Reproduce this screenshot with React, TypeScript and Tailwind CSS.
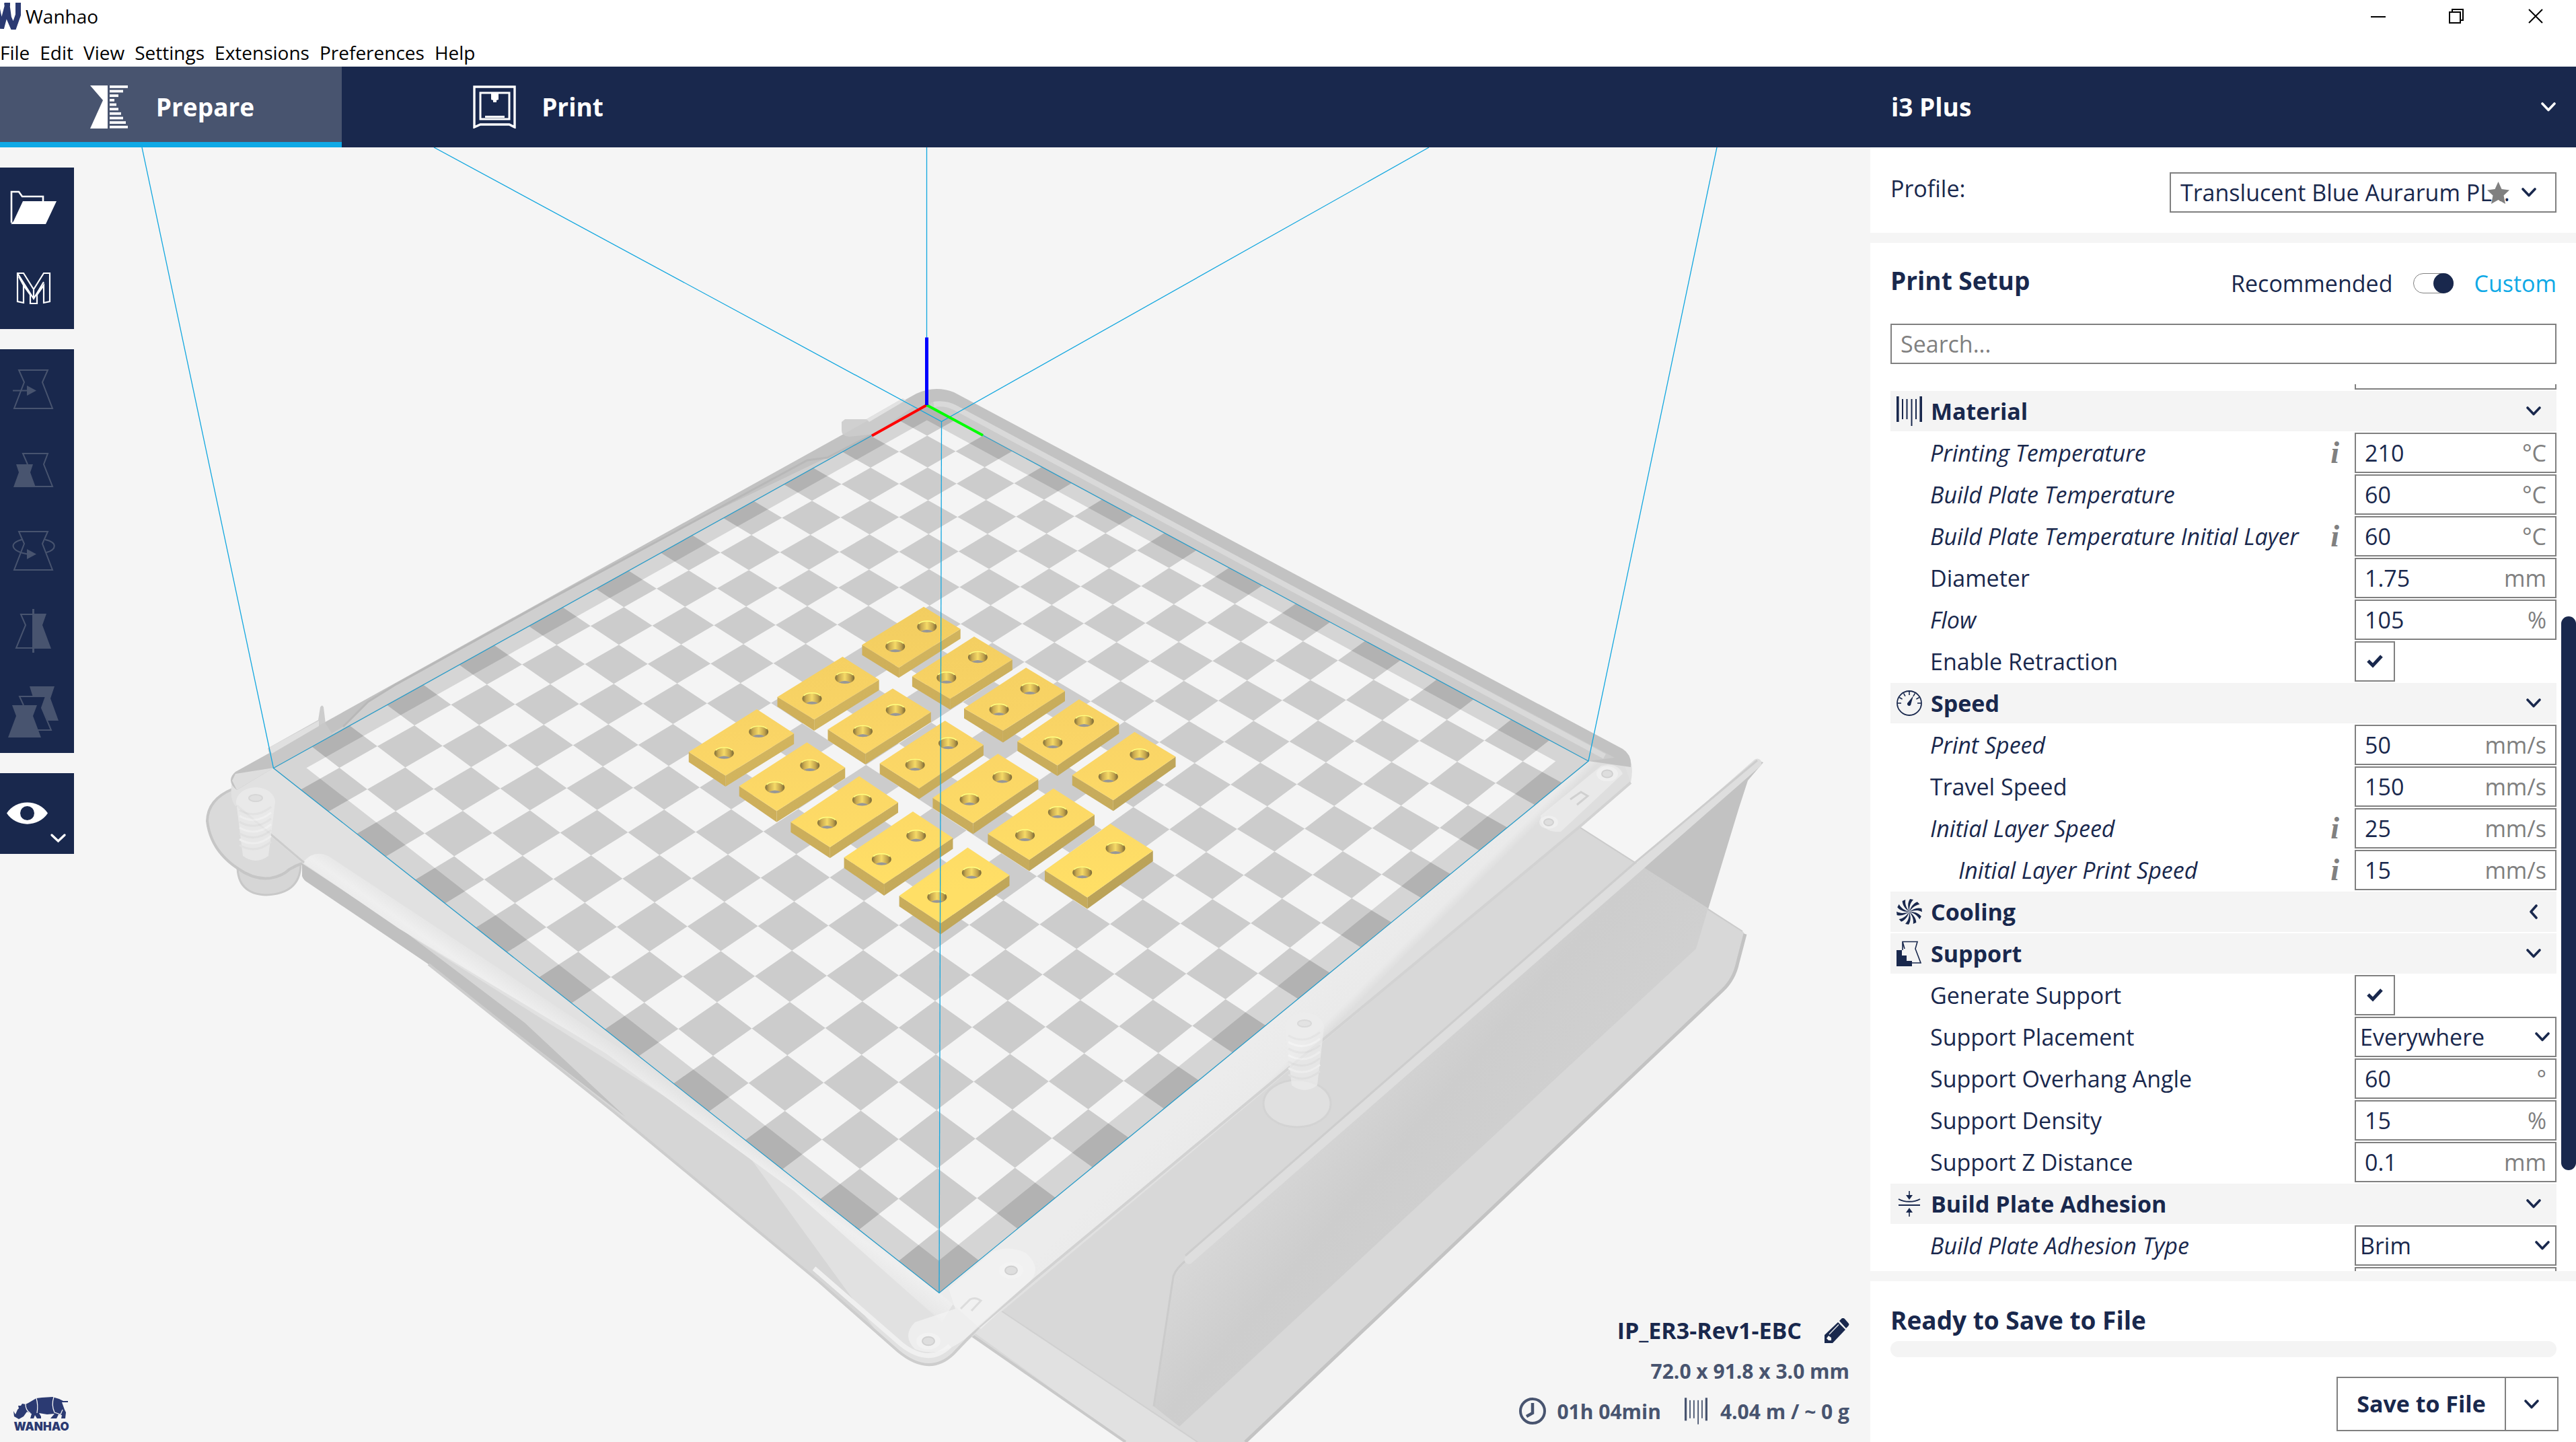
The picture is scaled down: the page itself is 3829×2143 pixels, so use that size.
import React from "react";

const NAVY = "#19284d";

type Pt = [number, number];

/* ---------- icons ---------- */

function Chevron({ left = false, className = "" }: { left?: boolean; className?: string }) {
  return left ? (
    <svg className={"shrink-0 " + className} width="22" height="22" viewBox="0 0 22 22" fill="none" stroke="currentColor" strokeWidth="3.6" strokeLinecap="round" strokeLinejoin="round">
      <path d="M15 2L7 11L15 20" />
    </svg>
  ) : (
    <svg className={"shrink-0 " + className} width="22" height="14" viewBox="0 0 22 14" fill="none" stroke="currentColor" strokeWidth="3.6" strokeLinecap="round" strokeLinejoin="round">
      <path d="M2 2L11 11.5L20 2" />
    </svg>
  );
}

function PrepareIcon() {
  const bars = [27, 20, 13, 7, 10, 13, 17, 20, 24, 27];
  return (
    <svg width="64" height="64" viewBox="0 0 64 64" fill="white">
      <path d="M4 0H30V64H4L23 22Z" />
      {bars.map((w, i) => (
        <rect key={i} x="33" y={i * 6.65} width={w} height="3.8" />
      ))}
    </svg>
  );
}

function PrintIcon() {
  return (
    <svg width="64" height="64" viewBox="0 0 64 64" fill="none" stroke="white">
      <path d="M2 62V2H62V62L54 58H11L2 62Z" strokeWidth="3.4" />
      <rect x="11" y="11" width="43" height="39" strokeWidth="3" />
      <path d="M27 12H38V21L35 22V25H30V22L27 21Z" fill="white" stroke="none" />
      <path d="M18 46.5H47" strokeWidth="3" />
    </svg>
  );
}

function SpoolIcon({ className = "" }: { className?: string }) {
  return (
    <svg className={"shrink-0 " + className} width="38" height="44" viewBox="0 0 38 44" fill="currentColor">
      <rect x="0" y="0" width="3.6" height="38" />
      <rect x="8" y="4" width="2" height="30" />
      <rect x="14.5" y="4" width="2" height="30" />
      <rect x="21.5" y="4" width="2" height="40" />
      <rect x="28" y="4" width="2" height="30" />
      <rect x="34.4" y="0" width="3.6" height="38" />
    </svg>
  );
}

function GaugeIcon() {
  const ticks = [-90, -60, -30, 0, 30, 60, 90];
  return (
    <svg className="shrink-0" width="38" height="38" viewBox="0 0 38 38" fill="none" stroke="currentColor">
      <circle cx="19" cy="19" r="18" strokeWidth="1.8" />
      {ticks.map((a) => (
        <path key={a} d="M19 2V7" strokeWidth="1.6" transform={`rotate(${a} 19 19)`} />
      ))}
      <path d="M25 8L21.5 20A2.8 2.8 0 1 1 17 18Z" fill="currentColor" stroke="none" />
    </svg>
  );
}

function FanIcon() {
  return (
    <svg className="shrink-0" width="38" height="38" viewBox="0 0 38 38" fill="currentColor">
      {[0, 36, 72, 108, 144, 180, 216, 252, 288, 324].map((a) => (
        <path key={a} d="M19 19C17 13 16 6 20 0L25 1C20 6 19 12 19 19Z" transform={`rotate(${a} 19 19)`} />
      ))}
    </svg>
  );
}

function SupportIcon() {
  return (
    <svg className="shrink-0" width="38" height="38" viewBox="0 0 38 38" fill="none" stroke="currentColor">
      <path d="M9 14V1.500H31L28 12L36 33H23M9 1.500L12 12" strokeWidth="1.6" />
      <path d="M0 14H8V22H15V30H23V38H0Z" fill="currentColor" stroke="none" />
    </svg>
  );
}

function AdhesionIcon() {
  return (
    <svg className="shrink-0" width="38" height="40" viewBox="0 0 38 40" fill="none" stroke="currentColor" strokeWidth="2">
      <path d="M3 22H35" />
      <path d="M3 13C12 18 26 18 35 13" />
      <path d="M19 1V8M19 32V39" strokeWidth="1.6" />
      <path d="M14 7H24L19 14Z M14 33H24L19 26Z" fill="currentColor" stroke="none" />
    </svg>
  );
}

/* ---------- tool buttons ---------- */

const toolIcons: Record<string, React.ReactNode> = {
  "Open File": (
    <>
      <path d="M17 82V36H28L33 43H64V50" fill="none" stroke="white" strokeWidth="2.6" />
      <path d="M34 50H84L68 84H16L20 80Z" fill="white" />
    </>
  ),
  Marketplace: (
    <path
      d="M26 37H35L50 61L65 37H74V79L65 81V55L55 69V82H45V69L35 55V81L26 79ZM26 37L50 75L65 50M35 55L28 42M50 62V74"
      fill="none"
      stroke="white"
      strokeWidth="2.2"
    />
  ),
  Move: (
    <g stroke="#48546f" strokeWidth="2" fill="none">
      <path d="M28 31H71L63 49L78 88H21L36 49Z" />
      <path d="M19 61.5H42" />
      <path d="M40 54L54 61.5L40 69Z" fill="#48546f" stroke="none" />
    </g>
  ),
  Scale: (
    <g stroke="#48546f" strokeWidth="2" fill="none">
      <path d="M41 51L34 35H71L65 51L78 84H50" />
      <path d="M24 51H49L45 63L53 85H20L28 63Z" fill="#48546f" stroke="none" />
    </g>
  ),
  Rotate: (
    <g stroke="#48546f" strokeWidth="2" fill="none">
      <path d="M28 31H71L63 49L78 88H21L36 49Z" />
      <path d="M33 43C13 47 15 60 41 64.5M67 43C86 47 84 58 69 62" />
      <path d="M40 57L54 64.5L40 72Z" fill="#48546f" stroke="none" />
    </g>
  ),
  Mirror: (
    <g stroke="#48546f" strokeWidth="2" fill="none">
      <path d="M50 34H31L38 50L24 84H50" />
      <path d="M50 33H69L63 50L76 85H50Z" fill="#48546f" stroke="none" />
      <path d="M49.5 26V91" strokeWidth="3" />
    </g>
  ),
  "Per Model Settings": (
    <g stroke="#48546f" strokeWidth="2" fill="none">
      <path d="M44 21H81L75 39L87 72H71L62 53L68 37H49Z" fill="#48546f" stroke="none" />
      <path d="M35 49L29 36H68L62 53L76 86H55" />
      <path d="M18 49H55L49 65L61 97H12L24 65Z" fill="#48546f" stroke="none" />
    </g>
  ),
  View: (
    <>
      <path d="M10 59.500C24 38 57 38 71 59.500C57 81 24 81 10 59.500Z" fill="white" />
      <circle cx="40.500" cy="59.500" r="10.500" fill={NAVY} />
      <path d="M77 92L86.500 101L96 92" fill="none" stroke="white" strokeWidth="3.4" strokeLinecap="round" />
    </>
  ),
};

const toolGroups = [
  ["Open File", "Marketplace"],
  ["Move", "Scale", "Rotate", "Mirror", "Per Model Settings"],
  ["View"],
];

function Toolbar() {
  return (
    <nav aria-label="Tools" className="absolute left-0 top-[30px] flex flex-col gap-[30px]">
      {toolGroups.map((group) => (
        <div key={group[0]} className="flex flex-col bg-[#19284d]">
          {group.map((name) => (
            <button key={name} aria-label={name} className="h-[120px] w-[110px]">
              <svg width="110" height="120" viewBox="0 0 110 120">
                {toolIcons[name]}
              </svg>
            </button>
          ))}
        </div>
      ))}
    </nav>
  );
}

/* ---------- 3D scene ---------- */

// Corners of the build plate: back, right, front, left.
const plate: Pt[] = [
  [1377.500, 602],
  [2361, 1131],
  [1396, 1921.500],
  [406.500, 1141.500],
];

// Perspective map from the unit square to the plate.
function project(u: number, v: number): Pt {
  const [[x0, y0], [x1, y1], [x2, y2], [x3, y3]] = plate;
  const dx1 = x1 - x2, dx2 = x3 - x2, sx = x0 - x1 + x2 - x3;
  const dy1 = y1 - y2, dy2 = y3 - y2, sy = y0 - y1 + y2 - y3;
  const det = dx1 * dy2 - dx2 * dy1;
  const g = (sx * dy2 - dx2 * sy) / det;
  const h = (dx1 * sy - sx * dy1) / det;
  const w = g * u + h * v + 1;
  return [
    ((x1 - x0 + g * x1) * u + (x3 - x0 + h * x3) * v + x0) / w,
    ((y1 - y0 + g * y1) * u + (y3 - y0 + h * y3) * v + y0) / w,
  ];
}

const quad = (u0: number, v0: number, u1: number, v1: number) =>
  "M" +
  [project(u0, v0), project(u1, v0), project(u1, v1), project(u0, v1)]
    .map(([x, y]) => `${x.toFixed(1)} ${y.toFixed(1)}`)
    .join("L") +
  "Z";

const N = 20;
let darkCells = "";
for (let i = 0; i < N; i++)
  for (let j = 0; j < N; j++) if ((i + j) % 2 === 0) darkCells += quad(i / N, j / N, (i + 1) / N, (j + 1) / N);

const plateOutline = quad(0, 0, 1, 1);
const plateInner = quad(0.025, 0.025, 0.975, 0.975);

// Top face (back, right, front, left), lower edge heights (left, front, right) and the two holes.
const blocks: number[][] = [
  [771, 117, 873, 209, 702, 370, 600, 275, 318, 412, 250, 780, 200, 692, 282],
  [911, 241, 1017, 337, 844, 500, 739, 406, 449, 545, 380, 921, 327, 834, 412],
  [1055, 370, 1163, 468, 991, 633, 883, 540, 581, 682, 510, 1066, 458, 980, 545],
  [1202, 502, 1313, 602, 1142, 777, 1031, 677, 717, 821, 645, 1216, 593, 1129, 682],
  [1356, 638, 1470, 741, 1297, 922, 1183, 818, 860, 967, 783, 1370, 732, 1283, 824],
  [546, 325, 647, 421, 467, 586, 365, 492, 532, 633, 464, 552, 413, 461, 499],
  [685, 457, 791, 555, 609, 729, 505, 627, 672, 773, 597, 693, 547, 602, 635],
  [830, 591, 937, 692, 758, 873, 649, 769, 813, 917, 736, 839, 685, 747, 775],
  [977, 729, 1089, 834, 908, 1018, 796, 912, 955, 1063, 876, 989, 826, 898, 919],
  [1131, 873, 1245, 982, 1064, 1170, 949, 1062, 1105, 1217, 1025, 1143, 972, 1052, 1068],
  [1289, 1020, 1407, 1132, 1225, 1327, 1107, 1214, 1259, 1374, 1176, 1303, 1122, 1211, 1223],
  [308, 543, 411, 644, 221, 820, 119, 721, 763, 865, 688, 313, 637, 217, 726],
  [447, 681, 553, 786, 363, 967, 259, 863, 905, 1013, 830, 455, 777, 358, 869],
  [592, 822, 700, 931, 511, 1117, 402, 1013, 1055, 1163, 974, 600, 921, 503, 1016],
  [741, 969, 852, 1079, 661, 1271, 550, 1160, 1204, 1319, 1124, 750, 1070, 654, 1168],
  [893, 1119, 1009, 1234, 818, 1434, 703, 1320, 1364, 1480, 1278, 904, 1224, 808, 1325],
];

function Hole({ x, y }: { x: number; y: number }) {
  return (
    <g>
      <ellipse cx={x} cy={y} rx="27" ry="24" fill="url(#bore)" />
      <path d={`M${x - 17} ${y + 19}Q${x} ${y + 5} ${x + 17} ${y + 19}Q${x} ${y + 29} ${x - 17} ${y + 19}Z`} fill="#979797" />
      <path d={`M${x - 23} ${y - 12}A27 24 0 0 1 ${x + 23} ${y - 12}`} fill="none" stroke="#ffff80" strokeWidth="4" />
    </g>
  );
}

function Block({ b }: { b: number[] }) {
  const [tx, ty, rx, ry, bx, by, lx, ly, l2, b2, r2, h1x, h1y, h2x, h2y] = b;
  return (
    <g>
      <path d={`M${lx} ${ly}L${bx} ${by}V${b2}L${lx} ${l2}Z`} fill="url(#sideLeft)" />
      <path d={`M${rx} ${ry}L${bx} ${by}V${b2}L${rx} ${r2}Z`} fill="url(#sideRight)" />
      <path d={`M${tx} ${ty}L${rx} ${ry}L${bx} ${by}L${lx} ${ly}Z`} fill="url(#blockTop)" />
      <Hole x={h1x} y={h1y} />
      <Hole x={h2x} y={h2y} />
    </g>
  );
}

function Screw({ x, y, r = 9 }: { x: number; y: number; r?: number }) {
  return (
    <g>
      <ellipse cx={x} cy={y} rx={r * 2} ry={r * 1.4} fill="#f6f6f6" opacity="0.5" />
      <ellipse cx={x} cy={y} rx={r} ry={r * 0.7} fill="#dedede" stroke="#d0d0d0" strokeWidth="2" />
    </g>
  );
}

function Spring({ x, y, h }: { x: number; y: number; h: number }) {
  const coils = Array.from({ length: 7 }, (_, i) => y + 24 + (i * (h - 40)) / 6);
  return (
    <g opacity="0.7">
      <path d={`M${x - 29} ${y + 12}A29 22 0 0 1 ${x + 29} ${y + 12}L${x + 19} ${y + h}Q${x} ${y + h + 14} ${x - 19} ${y + h}Z`} fill="#ededed" />
      {coils.map((c, i) => (
        <path key={i} d={`M${x - 24} ${c}Q${x} ${c + 14} ${x + 23} ${c - 5}`} fill="none" stroke={i % 2 ? "#f7f7f7" : "#e3e3e3"} strokeWidth="3" />
      ))}
      <ellipse cx={x} cy={y + 6} rx="10" ry="5" fill="#e0e0e0" stroke="#d2d2d2" strokeWidth="2" />
    </g>
  );
}

function Scene() {
  return (
    <svg className="absolute inset-0 h-full w-full" viewBox="0 219 2780 1924" preserveAspectRatio="xMinYMin slice" role="img" aria-label="Build plate with models">
      <defs>
        <linearGradient id="blockTop" gradientUnits="userSpaceOnUse" x1="0" y1="100" x2="0" y2="1300">
          <stop offset="0" stopColor="#f2cd60" />
          <stop offset="0.5" stopColor="#fad566" />
          <stop offset="1" stopColor="#ffdf66" />
        </linearGradient>
        <linearGradient id="sideLeft" gradientUnits="userSpaceOnUse" x1="100" y1="300" x2="1200" y2="1400">
          <stop offset="0" stopColor="#d3b25a" />
          <stop offset="1" stopColor="#c4aa5c" />
        </linearGradient>
        <linearGradient id="sideRight" gradientUnits="userSpaceOnUse" x1="300" y1="300" x2="1400" y2="1300">
          <stop offset="0" stopColor="#d8b95f" />
          <stop offset="1" stopColor="#b9a158" />
        </linearGradient>
        <linearGradient id="bore" x1="0" y1="0" x2="1" y2="0">
          <stop offset="0" stopColor="#7d6d3a" />
          <stop offset="0.2" stopColor="#c9a950" />
          <stop offset="0.5" stopColor="#f6da66" />
          <stop offset="0.8" stopColor="#c0a14c" />
          <stop offset="1" stopColor="#766636" />
        </linearGradient>
        <linearGradient id="cover" gradientUnits="userSpaceOnUse" x1="1900" y1="1700" x2="2200" y2="1960">
          <stop offset="0" stopColor="#d8d8d8" />
          <stop offset="0.35" stopColor="#cdcdcd" />
          <stop offset="1" stopColor="#d3d3d3" />
        </linearGradient>
        <linearGradient id="rail" gradientUnits="userSpaceOnUse" x1="770" y1="1450" x2="725" y2="1515">
          <stop offset="0" stopColor="#e2e2e2" />
          <stop offset="0.4" stopColor="#efefef" />
          <stop offset="0.75" stopColor="#e8e8e8" />
          <stop offset="1" stopColor="#d2d2d2" />
        </linearGradient>
        <linearGradient id="strip" gradientUnits="userSpaceOnUse" x1="1900" y1="1510" x2="1950" y2="1560">
          <stop offset="0" stopColor="#ececec" />
          <stop offset="0.8" stopColor="#eaeaea" />
          <stop offset="1" stopColor="#dedede" />
        </linearGradient>
      </defs>

      {/* screen cover behind the tray */}
      <path d="M1767 1870L2427 1290L2560 1172L2615 1131L2621 1133L2598 1160L2585 1200L2521 1410L1753 2120L1715 2090L1744 1897Z" fill="#c2c2c2" />
      {/* tray */}
      <path d="M2310 1205L2539 1350L2590 1384Q2595 1388 2593 1394L2583 1430Q2578 1455 2560 1472L1851 2143H1673L1441 1982L1539 1900Z" fill="#d8d8d8" />
      <path d="M2594 1388L2583 1430Q2578 1455 2560 1472L1851 2143" fill="none" stroke="#c3c3c3" strokeWidth="5" />
      <path d="M2310 1205L2590 1384" fill="none" stroke="#cbcbcb" strokeWidth="2" />
      <path d="M2427 1290L2439 1287L2539 1350L2521 1410L1753 2120L1715 2090L1744 1897L1767 1870Z" fill="url(#cover)" />
      <path d="M1715 2090L1744 1897Q1748 1884 1767 1870" fill="none" stroke="#cbcbcb" strokeWidth="3" />
      <path d="M1767 1872L2434 1290L2612 1134" fill="none" stroke="#dedede" strokeWidth="13" strokeLinecap="round" />
      <path d="M1762 1866L2428 1284L2612 1130" fill="none" stroke="#cdcdcd" strokeWidth="3" />
      <path d="M1423 1900L1485 1946L1780 2143H1673L1420 1960Z" fill="#e1e1e1" />
      <path d="M1423 1900L1485 1946L1780 2143" fill="none" stroke="#d0d0d0" strokeWidth="2" />
      <path d="M1441 1982L1673 2143" fill="none" stroke="#c9c9c9" strokeWidth="4" />

      {/* left knob and lobe */}
      <path d="M353 1285Q352 1329 396 1330Q446 1328 447 1285Z" fill="#d6d6d6" stroke="#c8c8c8" strokeWidth="3" />
      <path d="M345 1173Q309 1188 308 1220Q313 1264 354 1291Q378 1308 402 1305Q420 1302 430 1292Q440 1286 452 1282L420 1180Z" fill="#dadada" stroke="#c6c6c6" strokeWidth="4" />

      {/* frame sides */}
      <path d="M449 1282L453 1306L637 1433L912 1652L1218 1905L1335 2008Q1381 2046 1417 2012L1458 1975L2351 1226L2424 1163Q2431 1128 2412 1115L2361 1120L1396 1921L407 1142L345 1160Q340 1190 352 1200Z" fill="#e1e1e1" />
      <path d="M593 1380L760 1530L912 1652L1300 1975L1100 1700Z" fill="#d6d6d6" />
      <path d="M449 1283V1302Q451 1308 458 1312L637 1433L800 1560L930 1660L780 1520L593 1378Z" fill="#c0c0c0" />
      <path d="M450 1282Q466 1262 488 1272L1440 1900L1400 1965L1180 1770L900 1565L593 1380Z" fill="url(#rail)" />
      <path d="M352 1197L452 1282" fill="none" stroke="#cccccc" strokeWidth="3" />
      <path d="M637 1433L912 1652L1218 1905L1335 2008Q1381 2046 1417 2012L1455 1972" fill="none" stroke="#cdcdcd" strokeWidth="4" />
      <path d="M1210 1885L1340 1998Q1381 2030 1412 2000" fill="none" stroke="#f0f0f0" strokeWidth="7" />
      <path d="M2361 1131L2412 1130L2424 1163L2351 1226L1539 1900L1458 1975L1396 1921Z" fill="url(#strip)" />
      <path d="M2424 1163L2351 1226L1539 1900L1455 1972" fill="none" stroke="#d2d2d2" strokeWidth="4" />

      {/* back walls */}
      <path d="M407 1141L352 1174Q335 1160 350 1147L1362 585Q1390 572 1418 583L2412 1113Q2426 1122 2424 1140L2361 1131L1377 602Z" fill="#c2c2c2" />
      <path d="M407 1140L510 1080L547 1043L587 1018L1000 790L1225 682L1300 645L1377 602Z" fill="#cfcfcf" />
      <path d="M510 1080L547 1043L587 1018L800 900L1200 684L1230 680L1296 646" fill="none" stroke="#b8b8b8" strokeWidth="3" />
      <path d="M1384 598Q1405 596 1420 604L2400 1126L2361 1131L1382 603Z" fill="#cbcbcb" />
      <path d="M1388 601Q1405 598 1420 606L2385 1124" fill="none" stroke="#d9d9d9" strokeWidth="8" />
      <path d="M407 1141L352 1174L345 1160L350 1150Z" fill="#dedede" />

      {/* clips on the back-left wall */}
      <path d="M1251 627L1256 623H1288L1342 592L1358 604L1300 645L1262 649Q1251 648 1251 640Z" fill="#cccccc" opacity="0.9" />
      <path d="M1288 623L1342 592L1346 595L1292 627Z" fill="#e2e2e2" />
      <path d="M398 1112L473 1070L476 1051Q479 1046 481 1051L484 1076L497 1095L406 1141Z" fill="#c9c9c9" opacity="0.9" />
      <path d="M400 1111L474 1071L474 1079L404 1120Z" fill="#e0e0e0" />

      {/* plate */}
      <path d={plateOutline} fill="#f4f4f4" />
      <path d={darkCells} fill="#cccccc" />
      <path d={plateOutline + plateInner} fillRule="evenodd" fill="black" opacity="0.125" />

      {/* screws and springs */}
      <path d="M1410 1915L1475 1860Q1500 1850 1525 1862Q1550 1885 1530 1905L1440 1985Q1400 2020 1360 2005Q1340 1985 1360 1965L1420 1945Z" fill="#f4f4f4" opacity="0.7" />
      <Screw x={1503} y={1888} />
      <Screw x={1380} y={1993} />
      <path d="M1428 1945L1442 1931Q1450 1927 1458 1933L1444 1948" fill="none" stroke="#dcdcdc" strokeWidth="3" />
      <path d="M2290 1212L2380 1138Q2404 1132 2412 1150L2320 1236Q2290 1238 2290 1212Z" fill="#f0f0f0" opacity="0.6" />
      <Screw x={2389} y={1150} r={8} />
      <Screw x={2302} y={1222} r={7} />
      <path d="M2334 1188L2350 1177L2360 1183L2344 1196" fill="none" stroke="#d0d0d0" strokeWidth="3" />
      <ellipse cx="1928" cy="1640" rx="50" ry="35" fill="#e0e0e0" stroke="#d3d3d3" strokeWidth="3" />
      <Spring x={1939} y={1515} h={98} />
      <Spring x={380} y={1180} h={92} />

      {/* build volume */}
      <path d={plateOutline} fill="none" stroke="#2a9cc8" strokeWidth="1.3" />
      <path d="M211 219L406.500 1141.500M2552 219L2361 1131M1377.500 219V602M645 219L1399.500 626.500L2124 219" fill="none" stroke="#12a7df" strokeWidth="1.3" />
      <path d="M1377.500 602L1296 647.500" stroke="#ff0000" strokeWidth="4" />
      <path d="M1377.500 602L1461 647" stroke="#00ff00" strokeWidth="4" />
      <path d="M1377.500 602V501.500" stroke="#0000ff" strokeWidth="5" />

      <g transform="translate(960 860) scale(0.5357 0.3571)">
        {blocks.map((b, i) => (
          <Block key={i} b={b} />
        ))}
      </g>
      <path d="M1399.500 626.500L1396 1921.500" stroke="#12a7df" strokeWidth="1.3" />
    </svg>
  );
}

function BrandMark() {
  return (
    <div className="absolute bottom-[14px] left-[20px]">
      <svg width="84" height="54" viewBox="20 13 84 54" role="img" aria-label="Wanhao">
        <g fill="#2b3a72">
          <path d="M20 35L23 40L26 33L28 31L27 27L31 27L33 24L38 25L42 23L54 16L62 15L78 14L88 17L94 20L101 20V22L92 22L96 33L98 37L97 46H91L92 41L87 40L84 46H75L81 39L70 40L58 38L61 43V46H55L52 41L50 46H45L47 39L40 36L35 43L28 47L21 43Z" />
        </g>
        <path d="M38 25Q38 34 45 38M54 16Q57 26 55 38M80 14Q76 26 81 37L90 40L93 33" fill="none" stroke="#f4f4f4" strokeWidth="1.3" />
        <text x="61.500" y="64" textAnchor="middle" fontFamily="Inter, sans-serif" fontWeight="900" fontSize="17" fill="#2b3a72">
          WANHAO
        </text>
      </svg>
    </div>
  );
}

function JobInfo() {
  return (
    <div className="absolute bottom-4 right-[31px] flex flex-col items-end text-[30px] font-bold text-[#48546f]">
      <div className="flex h-[60px] items-center gap-[34px] text-[34px] text-[#19284d]">
        <span>IP_ER3-Rev1-EBC</span>
        <button aria-label="Rename job">
          <svg width="37" height="37" viewBox="0 0 37 37" fill="currentColor">
            <path d="M0 25L20 6L31 17L12 37H0Z" />
            <path d="M22 4L26 0Q28 -1 30 1L36 8Q37 10 35 12L32 15Z" />
            <path d="M3 30L6 26L10 29V33L6 33Z" fill="#f4f4f4" />
            <path d="M7 24L21 9.500" stroke="#f4f4f4" strokeWidth="1.2" />
          </svg>
        </button>
      </div>
      <div className="flex h-[60px] items-center">72.0 x 91.8 x 3.0 mm</div>
      <div className="flex h-[60px] items-center">
        <svg width="40" height="40" viewBox="0 0 40 40" fill="none" stroke="currentColor">
          <circle cx="20" cy="20" r="18" strokeWidth="4" />
          <path d="M20 8V23L11 28" strokeWidth="4.500" />
        </svg>
        <span className="ml-4">01h 04min</span>
        <SpoolIcon className="ml-[35px] h-[40px] w-[34px]" />
        <span className="ml-[19px]">4.04 m / ~ 0 g</span>
      </div>
    </div>
  );
}

/* ---------- settings ---------- */

type Row =
  | { kind: "section"; label: string; icon: React.ReactNode; closed?: boolean }
  | { kind: "field"; label: string; value: string; unit: string; italic?: boolean; info?: boolean; sub?: boolean }
  | { kind: "check"; label: string }
  | { kind: "select"; label: string; value: string; italic?: boolean };

const rows: Row[] = [
  { kind: "section", label: "Material", icon: <SpoolIcon /> },
  { kind: "field", label: "Printing Temperature", value: "210", unit: "°C", italic: true, info: true },
  { kind: "field", label: "Build Plate Temperature", value: "60", unit: "°C", italic: true },
  { kind: "field", label: "Build Plate Temperature Initial Layer", value: "60", unit: "°C", italic: true, info: true },
  { kind: "field", label: "Diameter", value: "1.75", unit: "mm" },
  { kind: "field", label: "Flow", value: "105", unit: "%", italic: true },
  { kind: "check", label: "Enable Retraction" },
  { kind: "section", label: "Speed", icon: <GaugeIcon /> },
  { kind: "field", label: "Print Speed", value: "50", unit: "mm/s", italic: true },
  { kind: "field", label: "Travel Speed", value: "150", unit: "mm/s" },
  { kind: "field", label: "Initial Layer Speed", value: "25", unit: "mm/s", italic: true, info: true },
  { kind: "field", label: "Initial Layer Print Speed", value: "15", unit: "mm/s", italic: true, info: true, sub: true },
  { kind: "section", label: "Cooling", icon: <FanIcon />, closed: true },
  { kind: "section", label: "Support", icon: <SupportIcon /> },
  { kind: "check", label: "Generate Support" },
  { kind: "select", label: "Support Placement", value: "Everywhere" },
  { kind: "field", label: "Support Overhang Angle", value: "60", unit: "°" },
  { kind: "field", label: "Support Density", value: "15", unit: "%" },
  { kind: "field", label: "Support Z Distance", value: "0.1", unit: "mm" },
  { kind: "section", label: "Build Plate Adhesion", icon: <AdhesionIcon /> },
  { kind: "select", label: "Build Plate Adhesion Type", value: "Brim", italic: true },
];

function SettingRow({ row }: { row: Row }) {
  if (row.kind === "section") {
    return (
      <button className="flex h-[60px] w-full shrink-0 items-center bg-[#f4f4f4] pl-[9px] pr-[23px] text-left font-bold">
        {row.icon}
        <span className="ml-[13px] flex-1">{row.label}</span>
        <Chevron left={row.closed} />
      </button>
    );
  }
  const id = row.label.toLowerCase().replace(/ /g, "-");
  const italic = row.kind !== "check" && row.italic;
  return (
    <div className={"flex h-[60px] shrink-0 items-center " + (row.kind === "field" && row.sub ? "pl-[101px]" : "pl-[59px]")}>
      <label htmlFor={id} className={"flex-1 whitespace-nowrap " + (italic ? "italic" : "")}>
        {row.label}
      </label>
      {row.kind === "field" && row.info && (
        <span aria-hidden="true" className="mr-[23px] font-['Liberation_Serif',serif] text-[46px] font-bold italic leading-none text-[#808080]">
          i
        </span>
      )}
      {row.kind === "field" && (
        <div className="flex h-[60px] w-[300px] items-center border-2 border-[#808080] pl-[13px] pr-[13px]">
          <input id={id} defaultValue={row.value} className="min-w-0 flex-1 bg-transparent outline-none" />
          <span className="text-[#808080]">{row.unit}</span>
        </div>
      )}
      {row.kind === "check" && (
        <div className="grid h-[60px] w-[300px] grid-cols-[60px]">
          <input id={id} type="checkbox" defaultChecked className="col-start-1 row-start-1 size-[60px] appearance-none border-2 border-[#808080]" />
          <svg className="pointer-events-none col-start-1 row-start-1 place-self-center" width="24" height="20" viewBox="0 0 24 20" fill="none" stroke="currentColor" strokeWidth="5">
            <path d="M2 9L9 16L22 2" />
          </svg>
        </div>
      )}
      {row.kind === "select" && (
        <div className="grid h-[60px] w-[300px] items-center">
          <select id={id} className="col-start-1 row-start-1 h-full w-full appearance-none border-2 border-[#808080] bg-white pl-[6px] outline-none">
            <option>{row.value}</option>
          </select>
          <Chevron className="pointer-events-none col-start-1 row-start-1 mr-[10px] justify-self-end" />
        </div>
      )}
    </div>
  );
}

function SidePanel() {
  return (
    <aside className="flex w-[1049px] shrink-0 flex-col text-[34px] text-[#19284d]">
      <section className="flex h-[127px] shrink-0 items-start justify-between bg-white pl-[30px] pr-[29px] pt-[37px]">
        <label htmlFor="profile" className="leading-[48px]">
          Profile:
        </label>
        <div className="grid h-[60px] w-[575px] items-center">
          <select id="profile" className="col-start-1 row-start-1 h-full w-full appearance-none border-2 border-[#808080] bg-white pl-[14px] outline-none">
            <option>Translucent Blue Aurarum PL...</option>
          </select>
          <div className="pointer-events-none col-start-1 row-start-1 mr-[30px] flex items-center gap-[18px] justify-self-end">
            <svg width="33" height="33" viewBox="0 0 33 33" fill="#808080">
              <path d="M16.500 0L21.500 11L33 12.500L24.500 20.500L27 33L16.500 27L6 33L8.500 20.500L0 12.500L11.500 11Z" />
            </svg>
            <Chevron />
          </div>
        </div>
      </section>

      <section className="mt-[15px] flex min-h-0 flex-1 flex-col bg-white pl-[30px]">
        <div className="flex h-[120px] shrink-0 items-center justify-between pr-[29px]">
          <h2 className="pb-[8px] text-[37px] font-bold">Print Setup</h2>
          <div className="flex items-center">
            <span>Recommended</span>
            <button role="switch" aria-checked="true" aria-label="Custom print setup" className="ml-[31px] mr-[30px] flex h-[30px] w-[60px] justify-end rounded-full border border-[#808080]">
              <span className="-mr-px -mt-px size-[30px] rounded-full bg-[#19284d]" />
            </button>
            <a href="#custom" className="text-[#0fa9e6]">
              Custom
            </a>
          </div>
        </div>
        <div className="shrink-0 pr-[29px]">
          <input type="search" aria-label="Search settings" placeholder="Search..." className="block h-[60px] w-full border-2 border-[#808080] pl-[13px] outline-none placeholder:text-[#808080]" />
        </div>
        <div className="mt-[30px] flex min-h-0 flex-1 gap-[7px]">
          <div className="flex min-w-0 flex-1 flex-col gap-[2px] overflow-hidden">
            <div className="-mt-[52px] h-[60px] w-[300px] shrink-0 self-end border-2 border-[#808080]" />
            {rows.map((row) => (
              <SettingRow key={row.label} row={row} />
            ))}
            <div className="h-[60px] w-[300px] shrink-0 self-end border-2 border-[#808080]" />
          </div>
          <div className="flex w-[22px] shrink-0 flex-col">
            <div className="flex-[345]" />
            <div className="flex-[823] rounded-full bg-[#19284d]" />
            <div className="flex-[150]" />
          </div>
        </div>
      </section>

      <section className="mt-[15px] shrink-0 bg-white pb-4 pl-[30px] pr-[26px] pt-[30px]">
        <h2 className="h-[59px] text-[37px] font-bold leading-[56px]">Ready to Save to File</h2>
        <div className="mr-[3px] h-[24px] rounded-xl bg-[#f4f4f4]" />
        <div className="mt-[29px] flex justify-end">
          <button className="h-[81px] w-[252px] border-2 border-[#808080] font-bold">Save to File</button>
          <button aria-label="More save options" className="-ml-[2px] flex h-[81px] w-[80px] items-center justify-center border-2 border-[#808080]">
            <Chevron />
          </button>
        </div>
      </section>
    </aside>
  );
}

/* ---------- window chrome ---------- */

const menus = ["File", "Edit", "View", "Settings", "Extensions", "Preferences", "Help"];

export default function App() {
  return (
    <div className="flex h-screen flex-col overflow-hidden bg-[#f5f5f5] font-['Open_Sans',sans-serif]">
      <div className="flex h-[48px] shrink-0 items-center bg-white">
        <svg width="32" height="40" viewBox="0 0 32 40" fill="none" stroke="#2b3a72" strokeWidth="8">
          <path d="M-6 0L2 38L11 4V0M10 0L13 22L20 38L27 18V0" />
        </svg>
        <span className="ml-[6px] flex-1 text-[28px] text-black">Wanhao</span>
        <div className="flex items-center text-black">
          <button aria-label="Minimize" className="flex h-[48px] w-[116px] items-center justify-center">
            <svg width="22" height="22" viewBox="0 0 22 22" stroke="currentColor" strokeWidth="2"><path d="M0 12H22" /></svg>
          </button>
          <button aria-label="Restore" className="flex h-[48px] w-[116px] items-center justify-center">
            <svg width="22" height="22" viewBox="0 0 22 22" stroke="currentColor" strokeWidth="2" fill="none"><path d="M1 5H17V21H1ZM5 5V1H21V17H17" /></svg>
          </button>
          <button aria-label="Close" className="flex h-[48px] w-[120px] items-center justify-center">
            <svg width="22" height="22" viewBox="0 0 22 22" stroke="currentColor" strokeWidth="2"><path d="M1 1L21 21M21 1L1 21" /></svg>
          </button>
        </div>
      </div>
      <nav aria-label="Menu" className="flex h-[51px] shrink-0 items-center gap-[15px] bg-white pt-2 text-[28px] text-black">
        {menus.map((m) => (
          <button key={m} className="leading-none">
            {m}
          </button>
        ))}
      </nav>
      <header className="flex h-[120px] shrink-0 bg-[#19284d] text-[37px] font-bold text-white">
        <button className="flex w-[508px] items-center justify-center gap-[38px] border-b-8 border-[#0fa9e6] bg-[#48546f] pt-2">
          <PrepareIcon />
          Prepare
        </button>
        <button className="ml-[38px] flex w-[508px] items-center justify-center gap-[38px]">
          <PrintIcon />
          Print
        </button>
        <button className="ml-auto flex w-[1049px] items-center justify-between pl-[31px] pr-[30px]">
          i3 Plus
          <Chevron />
        </button>
      </header>
      <div className="flex min-h-0 flex-1">
        <main className="relative min-w-0 flex-1 overflow-hidden">
          <Scene />
          <Toolbar />
          <BrandMark />
          <JobInfo />
        </main>
        <SidePanel />
      </div>
    </div>
  );
}
